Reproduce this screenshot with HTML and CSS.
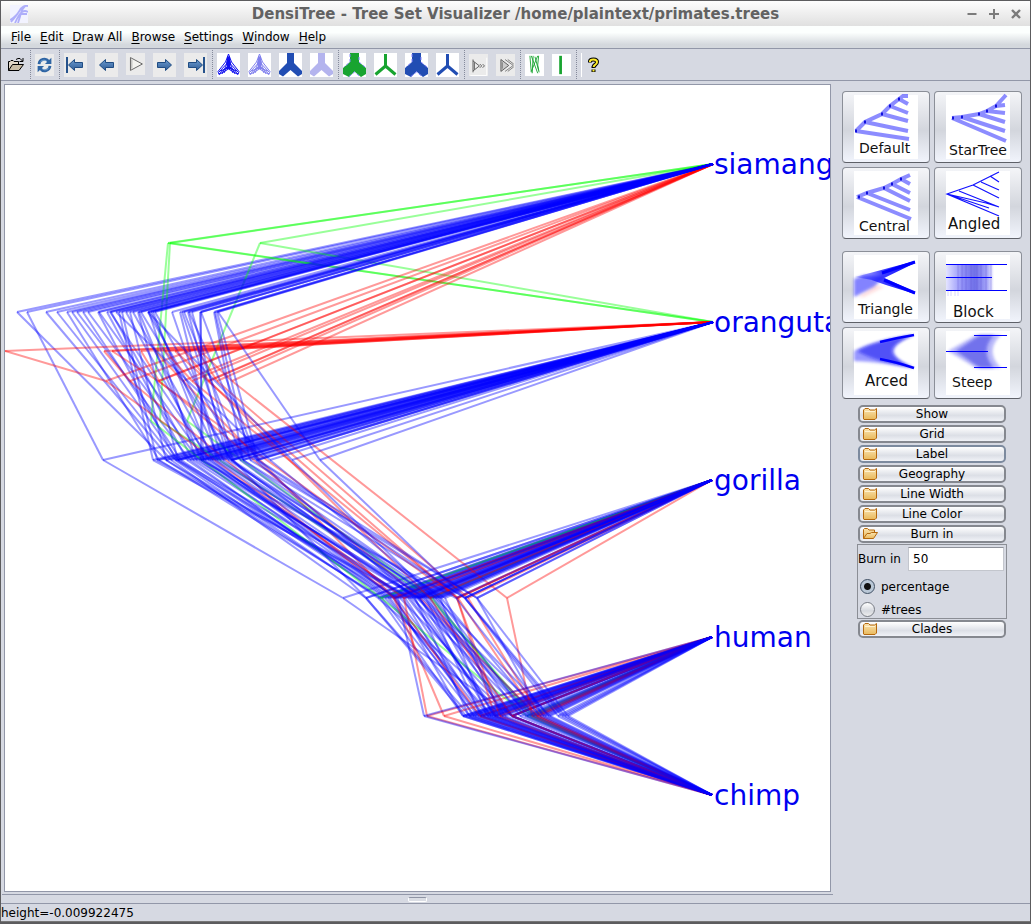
FILE: index.html
```html
<!DOCTYPE html>
<html lang="en">
<head>
<meta charset="utf-8">
<title>DensiTree - Tree Set Visualizer</title>
<link rel="stylesheet" href="styles.css">
</head>
<body>
<svg class="defs" aria-hidden="true">
  <defs>
    <linearGradient id="gold" x1="0" y1="0" x2="0" y2="1"><stop offset="0" stop-color="#fae3b0"/><stop offset="1" stop-color="#e9b95c"/></linearGradient>
    <linearGradient id="steel" x1="0" y1="0" x2="0" y2="1"><stop offset="0" stop-color="#6b9bd0"/><stop offset="1" stop-color="#2f5c96"/></linearGradient>
    <linearGradient id="fadeR"><stop offset="0" stop-color="#00f" stop-opacity=".15"/><stop offset=".45" stop-color="#00f" stop-opacity=".75"/><stop offset="1" stop-color="#00f"/></linearGradient>
    <linearGradient id="band"><stop offset="0" stop-color="#22f" stop-opacity=".12"/><stop offset=".35" stop-color="#33e" stop-opacity=".55"/><stop offset=".6" stop-color="#33d" stop-opacity=".7"/><stop offset=".85" stop-color="#33e" stop-opacity=".45"/><stop offset="1" stop-color="#22f" stop-opacity="0"/></linearGradient>
    <filter id="soft"><feGaussianBlur stdDeviation="1.4"/></filter>
    <symbol id="folder" viewBox="0 0 16 14"><path d="M1.5 12V3L3 1.500H6.500L8 3H12.500L14.500 1.500V11L13 12.500H2Z" fill="url(#gold)" stroke="#b5690f"/><path d="M3 4.500H13" stroke="#fff2cf"/></symbol>
    <symbol id="folder-open" viewBox="0 0 16 14"><path d="M1.500 11.500V2.500L2.500 1.500H5.500L7 3H12.500V6" fill="url(#gold)" stroke="#b5690f"/><path d="M1.500 11.500L5 6.500H8L9.500 5.500H15.500L11.500 11.500Z" fill="url(#gold)" stroke="#b5690f"/></symbol>
    <symbol id="arrow" viewBox="0 0 15 12"><path d="M.5 6L6.500.5V3.500H14.500V8.500H6.500V11.500Z" fill="url(#steel)" stroke="#1f4c83"/></symbol>
    <symbol id="fan" viewBox="0 0 23 24"><g fill="none" stroke="currentColor"><path d="M11.500 1L8.500 9 1 18.500 2 21.500 11.500 16 21 21.500 22 18.500 14.500 9Z"/><path d="M11 3L9.500 11 2 19M12 3L13.500 11 21 19M2 21L11 13M21 21L12 13M5 21L9 13 11.500 4M18 21L14 13 11.500 4M3 18L11 15M20 18L12 15M7 20L10 14M16 20L13 14"/><path d="M11.500 4V16" stroke-width="3"/></g></symbol>
    <symbol id="fat" viewBox="0 0 23 24"><path d="M8 0H15V10L23 18V21L19 23.500 11.500 17 4 23.500 0 21V18L8 10Z" fill="currentColor"/></symbol>
    <symbol id="wide" viewBox="0 0 23 24"><path d="M7 0H16V9L23 15V21L18 24 11.500 18.500 6 24 0 21V15L7 9Z" fill="currentColor"/><path d="M7 1V9L1 14M16 4V9L22 14M6 23.500L11.500 19 17 23.500" stroke="#8888ff" fill="none" stroke-dasharray="3 2"/></symbol>
    <symbol id="thin" viewBox="0 0 23 24"><path d="M11.500 1V13M11.500 13L1.500 21.500M11.500 13L21.500 21.500" stroke="currentColor" stroke-width="3" fill="none"/></symbol>
  </defs>
</svg>

<div class="window">
  <header class="titlebar">
    <svg class="logo" width="18" height="18" viewBox="0 0 18 18"><path fill="#f2f3ff" d="M0 0H18V18H0Z"/><path d="M1 17Q7 10 10 5T18 1M5 18Q9 9 12 7T18 7M0 15Q8 10 11 3M8 18Q10 12 11 8T15 1M10 9H17" stroke="#5a5af5" stroke-width="1.800" opacity=".45" fill="none"/></svg>
    <h1>DensiTree - Tree Set Visualizer /home/plaintext/primates.trees</h1>
    <div class="controls">
      <button type="button" aria-label="Minimize"><svg width="10" height="10" viewBox="0 0 10 10"><path d="M.5 5H9.500" stroke="#7b7b7b" stroke-width="2"/></svg></button>
      <button type="button" aria-label="Maximize"><svg width="10" height="10" viewBox="0 0 10 10"><path d="M0 5H10M5 0V10" stroke="#7b7b7b" stroke-width="2"/></svg></button>
      <button type="button" aria-label="Close"><svg width="10" height="10" viewBox="0 0 10 10"><path d="M1 1L9 9M9 1L1 9" stroke="#7b7b7b" stroke-width="2.400"/></svg></button>
    </div>
  </header>

  <nav class="menubar">
    <button type="button"><u>F</u>ile</button><button type="button"><u>E</u>dit</button><button type="button"><u>D</u>raw All</button><button type="button"><u>B</u>rowse</button><button type="button"><u>S</u>ettings</button><button type="button"><u>W</u>indow</button><button type="button"><u>H</u>elp</button>
  </nav>

  <div class="toolbar" role="toolbar">
    <div class="group">
      <button class="tool plain" type="button" aria-label="Open"><svg width="18" height="24" viewBox="0 0 18 24"><path d="M1.500 17.500V8.500H3L4 7.500H6L7 8.500H11.500V11.500" fill="#e2d8c8" stroke="#000"/><path d="M1.500 17.500L5.500 11.500H16.500L12 17.500Z" fill="#c9bda6" stroke="#000"/><path d="M9 6.500L11 5.500H13L15.500 8M16 5V8.500H12.500" fill="none" stroke="#000"/></svg></button>
    </div>
    <i class="sep"></i>
    <div class="group">
      <button class="tool small" type="button" aria-label="Reload"><svg width="19" height="24" viewBox="0 0 19 24"><g fill="none" stroke="#2f65a4" stroke-width="3"><path d="M3.500 11C4 5.500 11 4 14 8"/><path d="M15.500 13C15 18.500 8 20 5 16"/></g><path d="M17 4V11H10ZM2 20V13H9Z" fill="#2f65a4"/><path d="M5 9C6 6.500 10 6 12 8M14 15C13 17.500 9 18 7 16" fill="none" stroke="#7fa9d8"/></svg></button>
    </div>
    <i class="sep"></i>
    <div class="group">
      <button class="tool" type="button" aria-label="First tree"><svg width="23" height="24" viewBox="0 0 23 24"><path d="M3 4V20" stroke="#25528c" stroke-width="2"/><use href="#arrow" x="4" y="6" width="15" height="12"/></svg></button>
      <button class="tool" type="button" aria-label="Previous tree"><svg width="23" height="24" viewBox="0 0 23 24"><use href="#arrow" x="4" y="6" width="15" height="12"/></svg></button>
      <button class="tool small" type="button" aria-label="Play"><svg width="19" height="24" viewBox="0 0 19 24"><path d="M4 5L17 12 4 19Z" fill="#f4f4f0" stroke="#5c5c5c"/><path d="M5.500 7V17" stroke="#aaa"/></svg></button>
      <button class="tool" type="button" aria-label="Next tree"><svg width="23" height="24" viewBox="0 0 23 24"><g transform="matrix(-1 0 0 1 23 0)"><use href="#arrow" x="4" y="6" width="15" height="12"/></g></svg></button>
      <button class="tool" type="button" aria-label="Last tree"><svg width="23" height="24" viewBox="0 0 23 24"><g transform="matrix(-1 0 0 1 23 0)"><path d="M3 4V20" stroke="#25528c" stroke-width="2"/><use href="#arrow" x="4" y="6" width="15" height="12"/></g></svg></button>
    </div>
    <i class="sep"></i>
    <div class="group">
      <button class="tool white vivid" type="button" aria-label="Draw all trees"><svg width="23" height="24"><use href="#fan"/></svg></button>
      <button class="tool white faint" type="button" aria-label="Draw trees faintly"><svg width="23" height="24"><use href="#fan"/></svg></button>
      <button class="tool white royal" type="button" aria-label="Draw root canal"><svg width="23" height="24"><use href="#fat"/></svg></button>
      <button class="tool white lilac" type="button" aria-label="Draw consensus faintly"><svg width="23" height="24"><use href="#fat"/></svg></button>
    </div>
    <i class="sep"></i>
    <div class="group">
      <button class="tool white green" type="button" aria-label="Wide consensus"><svg width="23" height="24"><use href="#wide"/></svg></button>
      <button class="tool white green" type="button" aria-label="Thin consensus"><svg width="23" height="24"><use href="#thin"/></svg></button>
      <button class="tool white royal" type="button" aria-label="Wide trees"><svg width="23" height="24"><use href="#wide"/></svg></button>
      <button class="tool white royal" type="button" aria-label="Thin trees"><svg width="23" height="24"><use href="#thin"/></svg></button>
    </div>
    <i class="sep"></i>
    <div class="group">
      <button class="tool small" type="button" aria-label="Slower"><svg width="19" height="24" viewBox="0 0 19 24"><path d="M.5 23.500H18.500V4" fill="none" stroke="#fff"/><path d="M3.500 6V20M3.500 7.500L10.500 13 3.500 18.500M5 9V17" fill="none" stroke="#555"/><path d="M11 11L13 13 11 15M14 11L16 13 14 15" fill="none" stroke="#555"/></svg></button>
      <button class="tool small" type="button" aria-label="Faster"><svg width="19" height="24" viewBox="0 0 19 24"><path d="M4.500 6V19L13 12.500Z" fill="#ccc" stroke="#555"/><path d="M9 6L18 12.500 9 19M12 6L18.500 11M12 19L18.500 14M6 9V16" fill="none" stroke="#777"/></svg></button>
    </div>
    <i class="sep"></i>
    <div class="group">
      <button class="tool small white green" type="button" aria-label="Jitter"><svg width="19" height="24" viewBox="0 0 19 24"><path d="M4.500 2L6 20M6 2L13 21M8 2L7 21M13 2L6 19M14 2L13 12 14.500 20M10 3L14 18" fill="none" stroke="currentColor"/></svg></button>
      <button class="tool small white green" type="button" aria-label="No jitter"><svg width="19" height="24" viewBox="0 0 19 24"><path d="M8.500 2V22" stroke="currentColor" stroke-width="3"/></svg></button>
    </div>
    <i class="sep"></i>
    <div class="group help">
      <button class="tool plain" type="button" aria-label="Help"><svg width="12" height="24" viewBox="0 0 12 24"><path d="M2 9.500V8.500Q2 6.500 5.500 6.500T9 9Q9 10.500 7.500 11.500T5.500 14V15M5.500 16.500V19" fill="none" stroke="#000" stroke-width="4"/><path d="M2 9V8.500Q2 6.500 5.500 6.500T9 9Q9 10.500 7.500 11.500T5.500 14M5.500 16.500V18.500" fill="none" stroke="#ffee2b" stroke-width="2"/></svg></button>
    </div>
  </div>

  <main class="content">
    <div class="left">
      <section class="canvas">
        <svg id="trees" viewBox="5 85 825 806" preserveAspectRatio="xMinYMin meet" role="img" aria-label="Primate tree set">
          <g id="lines"></g>
          <g class="taxa">
            <text x="714" y="174">siamang</text>
            <text x="714" y="332">orangutan</text>
            <text x="714" y="490">gorilla</text>
            <text x="714" y="647">human</text>
            <text x="714" y="805">chimp</text>
          </g>
        </svg>
      </section>
      <div class="splitter"><span class="grip"></span></div>
    </div>

    <aside class="sidebar">
      <div class="presets">
        <button type="button"><svg width="64" height="64" viewBox="0 0 64 64"><rect width="64" height="64" fill="#fff"/><path d="M54 1H49L45 4 36 11 28 19 11 27 2 36M45 4L54 9M36 11L54 18M28 19L54 26M11 27L54 36M2 36L55 44" class="branch"/><path d="M44 4h2M35 11h2M27 19h2M10 27h2M1 36h2" class="joint"/><text x="5" y="58">Default</text></svg></button>
        <button type="button"><svg width="64" height="64" viewBox="0 0 64 64"><rect width="64" height="64" fill="#fff"/><path d="M60 0L50 11 41 16 33 19 16 22 6 23M50 11L59 10M41 16L59 18M33 19L59 27M16 22L59 36M6 23L60 46" class="branch"/><path d="M49 11h2M40 16h2M32 19h2M15 22h2M6 23h2" class="joint"/><text x="3" y="60">StarTree</text></svg></button>
        <button type="button"><svg width="64" height="64" viewBox="0 0 64 64"><rect width="64" height="64" fill="#fff"/><path d="M56 4L47 8 38 13 30 17 13 22 3 26M47 8L56 13M38 13L56 22M30 17L56 30M13 22L56 39M3 26L57 48" class="branch"/><path d="M46 8h2M37 13h2M29 17h2M12 22h2M4 26h2" class="joint"/><text x="5" y="60">Central</text></svg></button>
        <button type="button"><svg width="64" height="64" viewBox="0 0 64 64"><rect width="64" height="64" fill="#fff"/><path d="M53 1L27 14 1 23 53 45M44 5L53 11M35 11L53 19M27 14L53 27M13 20L53 36M1 23L40 32 53 36M1 23L43 37" fill="none" stroke="#11f" stroke-width="1.200"/><text class="big" x="2" y="58">Angled</text></svg></button>
      </div>
      <div class="presets">
        <button type="button"><svg width="64" height="64" viewBox="0 0 64 64"><rect width="64" height="64" fill="#fff"/><path d="M0 42V24L10 20 30 22 20 32Z" fill="#33f" opacity=".6" filter="url(#soft)"/><path d="M4 42L22 30 30 32 10 42Z" fill="#f66" opacity=".2" filter="url(#soft)"/><path d="M1 22L61 6V8L24 26ZM6 21L24 20 61 37V39L32 30Z" fill="url(#fadeR)"/><path d="M61 7L28 18M61 38L30 25" stroke="#00f" stroke-width="3"/><text x="4" y="59">Triangle</text></svg></button>
        <button type="button"><svg width="64" height="64" viewBox="0 0 64 64"><rect width="64" height="64" fill="#fff"/><rect y="9" width="48" height="27" fill="url(#band)"/><path d="M12 9V36M16 9V36M20 9V36M25 9V36M31 9V36M35 9V36M40 9V36M45 9V36" stroke="#54c" opacity=".3"/><path d="M0 9.500H61M0 22.500H46M0 35.500H61" stroke="#00f"/><path d="M2 36V41M5 36V41M9 36V41M12 36V41" stroke="#77f" opacity=".3"/><text class="big" x="7" y="62">Block</text></svg></button>
        <button type="button"><svg width="64" height="64" viewBox="0 0 64 64"><rect width="64" height="64" fill="#fff"/><path d="M0 20Q20 9 60 4 20 20 60 37 18 30 0 30Z" fill="#33f" opacity=".5" filter="url(#soft)"/><path d="M60 4Q22 9 3 20 22 31 60 37 38 27 38 20T60 4Z" fill="#11e" opacity=".5" filter="url(#soft)"/><path d="M60 4Q42 7 26 11M60 37Q42 31 26 28" fill="none" stroke="#00f" stroke-width="2.500"/><text class="big" x="11" y="55">Arced</text></svg></button>
        <button type="button"><svg width="64" height="64" viewBox="0 0 64 64"><rect width="64" height="64" fill="#fff"/><path d="M2 20L30 4H55Q38 20 55 37H30Z" fill="#33e" opacity=".35" filter="url(#soft)"/><path d="M10 20L34 4H48Q33 20 48 37H34Z" fill="#22d" opacity=".45" filter="url(#soft)"/><path d="M28 4.500H61M28 36.500H61M0 20.500H42" stroke="#00f"/><text x="6" y="56">Steep</text></svg></button>
      </div>

      <div class="accordion">
        <button type="button"><svg width="16" height="14"><use href="#folder"/></svg><span>Show</span></button>
        <button type="button"><svg width="16" height="14"><use href="#folder"/></svg><span>Grid</span></button>
        <button type="button" class="hover"><svg width="16" height="14"><use href="#folder"/></svg><span>Label</span></button>
        <button type="button"><svg width="16" height="14"><use href="#folder"/></svg><span>Geography</span></button>
        <button type="button"><svg width="16" height="14"><use href="#folder"/></svg><span>Line Width</span></button>
        <button type="button"><svg width="16" height="14"><use href="#folder"/></svg><span>Line Color</span></button>
        <button type="button" aria-expanded="true"><svg width="16" height="14"><use href="#folder-open"/></svg><span>Burn in</span></button>
        <div class="burnin">
          <div class="field"><label for="burn">Burn in</label><input id="burn" type="text" value="50"></div>
          <label class="choice"><input type="radio" name="unit" checked>percentage</label>
          <label class="choice"><input type="radio" name="unit">#trees</label>
        </div>
        <button type="button"><svg width="16" height="14"><use href="#folder"/></svg><span>Clades</span></button>
      </div>
    </aside>
  </main>

  <footer class="status">height=-0.009922475</footer>
</div>
<script src="trees.js"></script>
</body>
</html>
```

FILE: styles.css
```css
* { box-sizing: border-box; }

body {
  margin: 0;
  font: 12px/16px "DejaVu Sans", sans-serif;
  color: #000;
  background: #d6d9e2;
}

button {
  font: inherit;
  color: inherit;
  margin: 0;
  padding: 0;
  border: 0;
  background: none;
}

.defs { position: absolute; width: 0; height: 0; }

.window {
  display: flex;
  flex-direction: column;
  height: 100vh;
  border: 1px solid #5c5c5e;
  border-bottom-width: 2px;
  overflow: hidden;
}

.titlebar {
  display: grid;
  grid-template-columns: 60px 1fr 60px;
  align-items: center;
  height: 25px;
  flex: none;
  padding: 0 9px;
  background: linear-gradient(#fdfdfd, #e0e0e0);
}
.titlebar h1 {
  margin: 0;
  font-size: 15px;
  line-height: 24px;
  color: #626262;
  text-align: center;
  white-space: nowrap;
}
.logo { display: block; }
.controls { display: flex; justify-content: flex-end; gap: 12px; }
.controls svg { display: block; }

.menubar {
  display: flex;
  flex: none;
  height: 23px;
  padding: 0 6px;
  gap: 1px;
  border-bottom: 1px solid #9297a8;
  background: linear-gradient(#fcfffe 30%, #d4d8dd 85%);
}
.menubar button { padding: 0 4px; line-height: 22px; }
.menubar u { text-underline-offset: 2px; }

.toolbar {
  display: flex;
  align-items: center;
  flex: none;
  gap: 4px;
  height: 32px;
  padding-left: 6px;
  border-bottom: 1px solid #9297a8;
}
.group { display: flex; gap: 8px; }
.sep { align-self: stretch; width: 2px; margin: 1px 0; border-right: 1px dotted #858a9b; }
.tool { width: 23px; height: 24px; background: #ebebeb; }
.tool svg { display: block; }
.small { width: 19px; height: 22px; }
.small svg { height: 22px; }
.plain { width: auto; background: none; }
.white { background: #fff; }
.vivid { color: #1010f0; }
.faint { color: #8080ee; }
.royal { color: #214db3; }
.lilac { color: #b4b4ee; }
.green { color: #18a430; }
.help { padding-left: 6px; border-left: 1px solid #fff; }

.content { display: flex; flex: 1; min-height: 0; }
.left { display: flex; flex-direction: column; flex: 1; min-width: 0; padding: 3px 0 0 3px; }
.canvas {
  flex: 1;
  min-height: 0;
  margin: 0 2px 2px 0;
  border: 1px solid #9297a8;
  background: #fff;
  overflow: hidden;
}
.canvas svg { display: block; width: 100%; height: 100%; }
.canvas line { stroke-width: 2; stroke-opacity: .4; }
.canvas .blue { stroke: #00f; }
.canvas .red { stroke: #f00; }
.canvas .lime { stroke: #0f0; }
.taxa { font-size: 28px; fill: #0000f0; }
.splitter {
  display: flex;
  justify-content: center;
  align-items: center;
  height: 9px;
  flex: none;
  margin-left: -2px;
  border-top: 1px solid #9297a8;
}
.grip { width: 19px; height: 5px; border: 1px solid #fff; border-top: 1px solid #8f94a4; border-radius: 2px; background: #dadde4; }

.sidebar { flex: none; width: 197px; padding: 10px 8px 0 9px; }
.presets { display: grid; grid-template-columns: 88px 88px; gap: 4px; margin-bottom: 12px; }
.presets button {
  height: 72px;
  display: flex;
  justify-content: center;
  padding-top: 3px;
  border: 1px solid #8b8f98;
  border-bottom-color: #5e6168;
  border-radius: 4px;
  background: linear-gradient(#f4f5f8, #d3d6dd 55%, #f1f4fc);
}
.presets svg { overflow: visible; }
.presets text { font-size: 14px; fill: #111; }
.presets .big { font-size: 15px; }
.branch { fill: none; stroke: #00f; stroke-opacity: .45; stroke-width: 4; }
.joint { stroke: #1111dd; stroke-width: 3; }

.accordion { width: 150px; margin: -6px 0 0 15px; }
.accordion button {
  display: flex;
  align-items: center;
  width: 148px;
  height: 18px;
  margin: 0 1px 2px;
  padding: 0 2px;
  border: 2px solid #85888f;
  border-radius: 5px;
  background: linear-gradient(#fff, #dcdfe6 60%, #f0f2f7);
}
.accordion .hover { border-color: #7c8a9e; }
.accordion button svg { flex: none; }
.accordion span { flex: 1; line-height: 14px; text-align: center; padding-right: 16px; }
.burnin { margin: -1px 0 1px; padding: 2px 2px 0 0; height: 75px; border: 1px solid #8b8e95; }
.field { display: flex; align-items: center; justify-content: space-between; margin-bottom: 4px; }
.field input {
  width: 96px;
  height: 24px;
  padding: 0 4px;
  font: inherit;
  border: 1px solid #c3c6cd;
  border-top-color: #8e9199;
  background: #fff;
}
.choice { display: flex; align-items: center; height: 23px; gap: 6px; padding-left: 2px; }
.choice input {
  appearance: none;
  width: 15px;
  height: 15px;
  margin: 0;
  border: 1px solid #777b84;
  border-radius: 50%;
  background: linear-gradient(#fff, #d5d8de 60%, #eee);
}
.choice input:checked { border-color: #3f4f63; background: radial-gradient(circle, #111 3px, #b9c7d6 4px); }

.status { flex: none; height: 19px; border-top: 1px solid #9297a8; border-bottom: 1px solid #777; line-height: 18px; }
```

FILE: trees.js
```js
const taxa = {
  siamang: [713, 164], orangutan: [713, 322], gorilla: [712, 480],
  human: [712, 637], chimp: [712, 795]
};

// Node x positions of each tree, ordered from the root towards human/chimp.
const blue = [
  [17, 166, 380, 463], [27, 103, 343, 512], [46, 171, 366, 470],
  [57, 175, 378, 512], [67, 159, 382, 475], [72, 178, 388, 480], [77, 190, 385, 492],
  [83, 181, 393, 483], [88, 199, 396, 488], [98, 176, 400, 512], [99, 205, 403, 473],
  [107, 187, 390, 478], [110, 210, 405, 484], [111, 193, 408, 500], [119, 153, 410, 497],
  [122, 157, 412, 525], [126, 208, 415, 469], [130, 166, 398, 424], [133, 215, 417, 530],
  [138, 178, 419, 512], [139, 201, 420, 490], [141, 231, 422, 536], [148, 231, 424, 545],
  [149, 196, 426, 481], [151, 220, 428, 494], [153, 212, 395, 463], [155, 240, 430, 505],
  [172, 223, 433, 512], [180, 217, 436, 550], [182, 232, 438, 527], [184, 243, 441, 540],
  [188, 228, 445, 502], [189, 256, 414, 495], [192, 233, 366, 466], [200, 203, 418, 533],
  [201, 201, 456, 548], [201, 257, 465, 558], [214, 243, 465, 565], [215, 250, 477, 568],
  [217, 258, 477, 543], [218, 320, 465, 562], [116, 270, 440, 487], [148, 292, 435, 520]
];
// Root, siamang node, gorilla node, human/chimp node.
const red = [
  [5, 106, 404, 427], [104, 130, 394, 444], [112, 158, 457, 495], [141, 159, 420, 537],
  [155, 183, 394, 480], [165, 192, 458, 537], [175, 208, 457, 500],
  [198, 217, 468, 540], [200, 232, 507, 532], [184, 209, 430, 512]
];
// Siamang/orangutan node, root, gorilla node, human/chimp node.
const lime = [[168, 151, 381, 527], [170, 160, 430, 534], [260, 187, 432, 531]];

const group = document.getElementById("lines");

function branch(color, from, to) {
  const line = document.createElementNS("http://www.w3.org/2000/svg", "line");
  line.setAttribute("class", color);
  line.setAttribute("x1", from[0]);
  line.setAttribute("y1", from[1]);
  line.setAttribute("x2", to[0]);
  line.setAttribute("y2", to[1]);
  group.append(line);
}

function crown(color, inner, outer) {
  branch(color, inner, taxa.gorilla);
  branch(color, inner, outer);
  branch(color, outer, taxa.human);
  branch(color, outer, taxa.chimp);
}

function drawBlue([root, mid, inner, outer]) {
  branch("blue", [root, 312], taxa.siamang);
  branch("blue", [root, 312], [mid, 460]);
  branch("blue", [mid, 460], taxa.orangutan);
  branch("blue", [mid, 460], [inner, 598]);
  crown("blue", [inner, 598], [outer, 716]);
}

function drawRed([root, mid, inner, outer]) {
  branch("red", [root, 351], taxa.orangutan);
  branch("red", [root, 351], [mid, 381]);
  branch("red", [mid, 381], taxa.siamang);
  branch("red", [mid, 381], [inner, 598]);
  crown("red", [inner, 598], [outer, 716]);
}

function drawLime([pair, root, inner, outer]) {
  branch("lime", [pair, 243], taxa.siamang);
  branch("lime", [pair, 243], taxa.orangutan);
  branch("lime", [root, 421], [pair, 243]);
  branch("lime", [root, 421], [inner, 598]);
  crown("lime", [inner, 598], [outer, 716]);
}

blue.slice(0, 14).forEach(drawBlue);
lime.forEach(drawLime);
red.slice(0, 5).forEach(drawRed);
blue.slice(14, 28).forEach(drawBlue);
red.slice(5).forEach(drawRed);
blue.slice(28).forEach(drawBlue);
```
